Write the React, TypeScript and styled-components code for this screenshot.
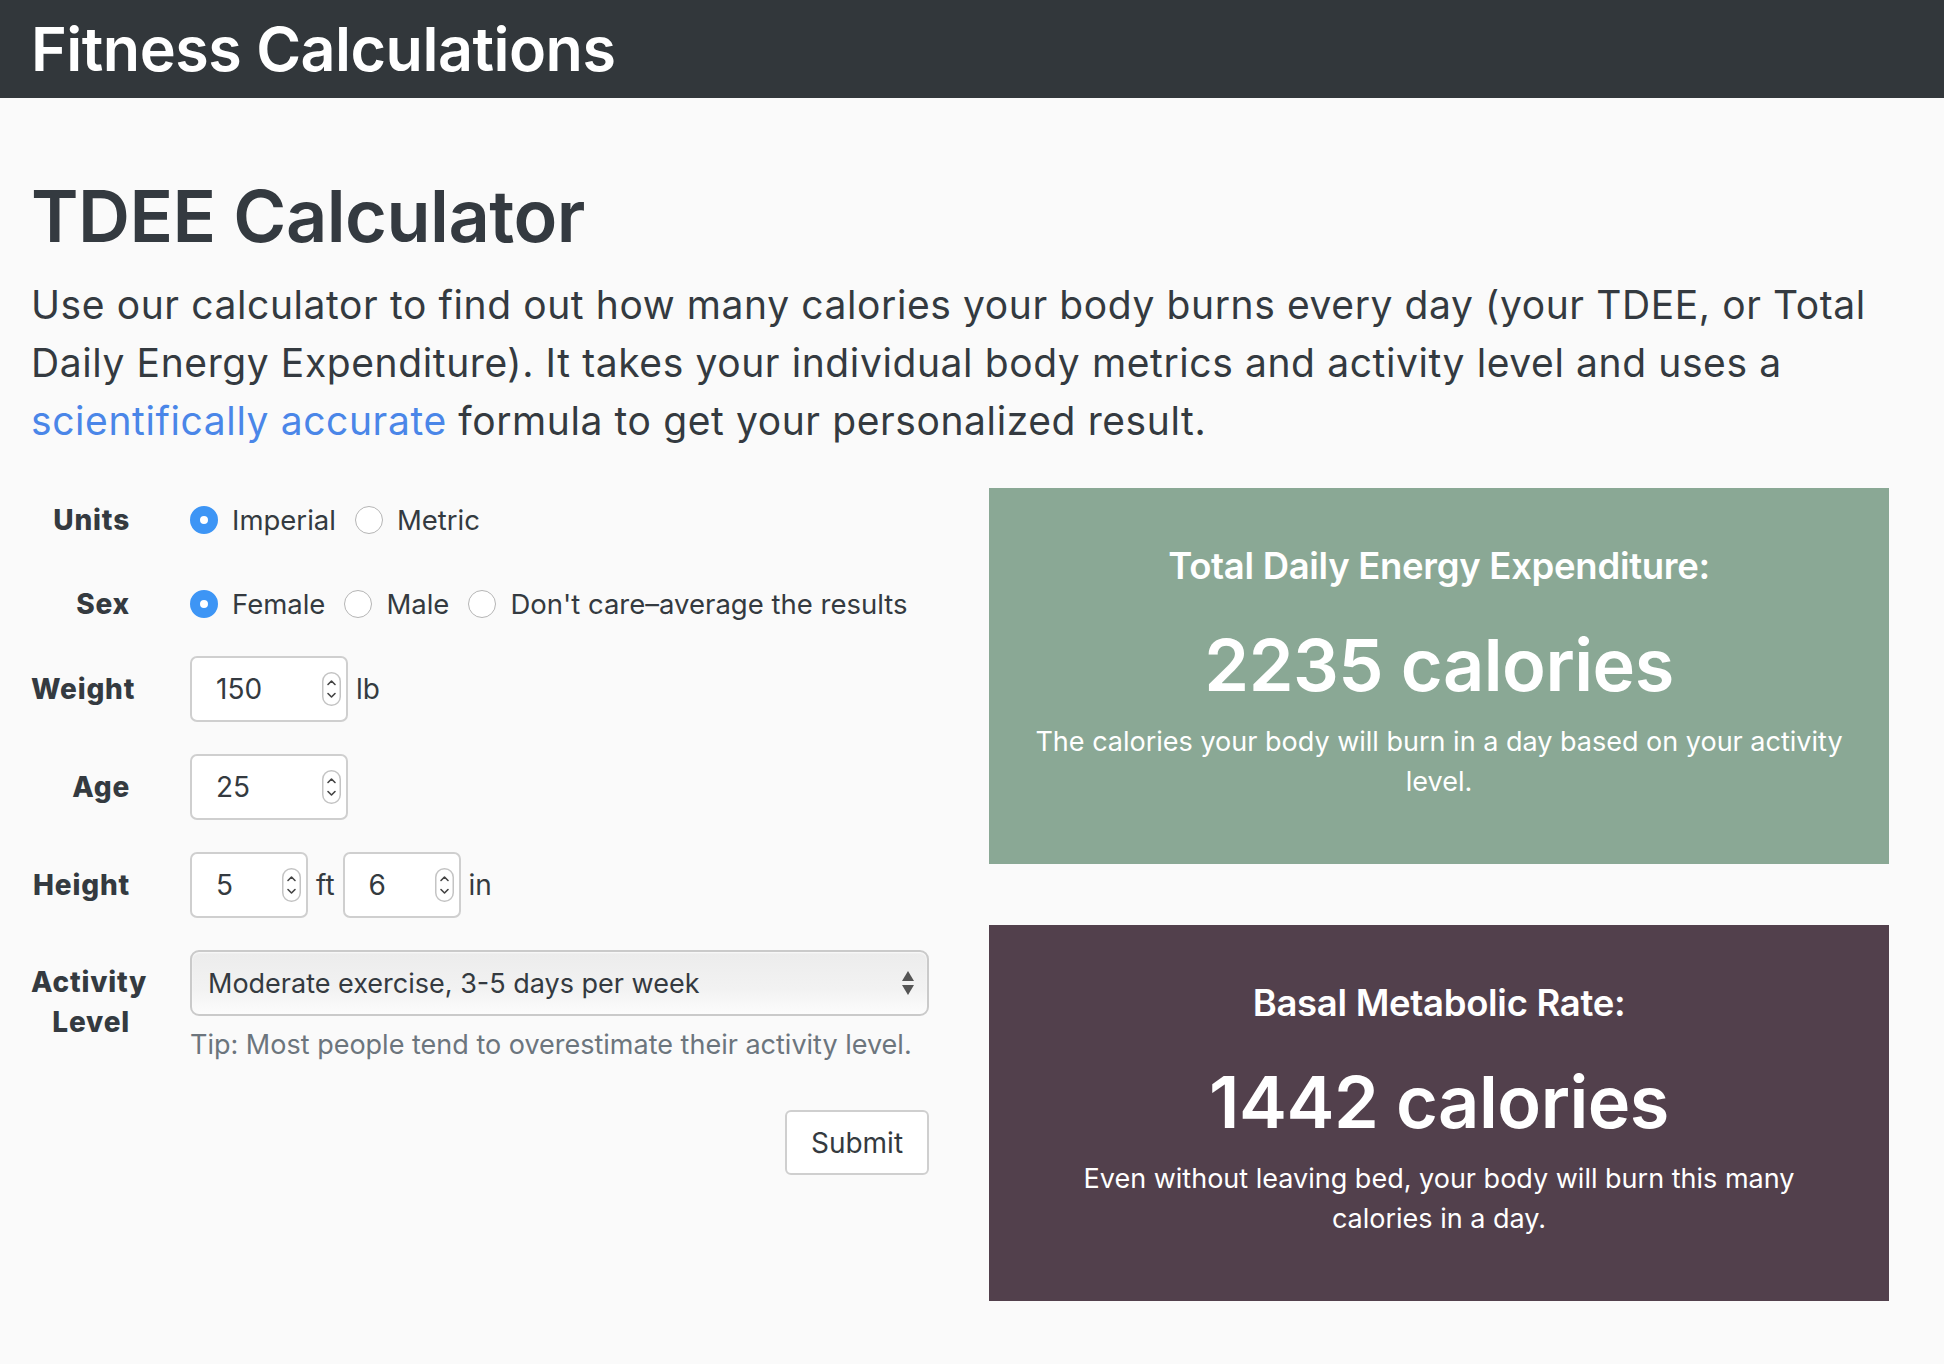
import styled, { createGlobalStyle } from 'styled-components';

const GlobalStyle = createGlobalStyle`
  html, body {
    margin: 0;
    padding: 0;
    background: #fafafa;
    font-family: Inter, "Open Sans", sans-serif;
    color: #343a40;
  }
  * { box-sizing: border-box; }
`;

const TEXT = '#343a40';

type RadioOption = { label: string; checked?: boolean };

const units: RadioOption[] = [{ label: 'Imperial', checked: true }, { label: 'Metric' }];
const sexes: RadioOption[] = [
  { label: 'Female', checked: true },
  { label: 'Male' },
  { label: "Don't care–average the results" },
];

function Spinner() {
  return (
    <SpinBox viewBox="0 0 19 34" width="19" height="34">
      <rect x="0.75" y="0.75" width="17.5" height="32.5" rx="8.5" fill="#fff" stroke="#c4c4c4" strokeWidth="1.5" />
      <path d="M6 12.5 L9.5 9 L13 12.5" fill="none" stroke="#444" strokeWidth="1.6" strokeLinecap="round" strokeLinejoin="round" />
      <path d="M6 21.5 L9.5 25 L13 21.5" fill="none" stroke="#444" strokeWidth="1.6" strokeLinecap="round" strokeLinejoin="round" />
    </SpinBox>
  );
}

function NumberField({ value, width }: { value: string; width: number }) {
  return (
    <NumBox $width={width}>
      <NumInput type="text" defaultValue={value} />
      <Spinner />
    </NumBox>
  );
}

export default function App() {
  return (
    <>
      <GlobalStyle />
      <Header>
        <Brand>Fitness Calculations</Brand>
      </Header>
      <Main>
        <Title>TDEE Calculator</Title>
        <Lead>
          Use our calculator to find out how many calories your body burns every day (your TDEE, or Total
          Daily Energy Expenditure). It takes your individual body metrics and activity level and uses a{' '}
          <Link href="#">scientifically accurate</Link> formula to get your personalized result.
        </Lead>
        <Columns>
          <Form onSubmit={(e) => e.preventDefault()}>
            <Row $radio>
              <Label>Units</Label>
              <Options>
                {units.map((o) => (
                  <Option key={o.label}>
                    <Radio type="radio" name="units" defaultChecked={o.checked} />
                    {o.label}
                  </Option>
                ))}
              </Options>
            </Row>
            <Row $radio>
              <Label>Sex</Label>
              <Options>
                {sexes.map((o) => (
                  <Option key={o.label}>
                    <Radio type="radio" name="sex" defaultChecked={o.checked} />
                    {o.label}
                  </Option>
                ))}
              </Options>
            </Row>
            <Row>
              <Label>Weight</Label>
              <Fields>
                <NumberField value="150" width={158} />
                <Unit>lb</Unit>
              </Fields>
            </Row>
            <Row>
              <Label>Age</Label>
              <Fields>
                <NumberField value="25" width={158} />
              </Fields>
            </Row>
            <Row>
              <Label>Height</Label>
              <Fields>
                <NumberField value="5" width={118} />
                <Unit>ft</Unit>
                <NumberField value="6" width={118} />
                <Unit>in</Unit>
              </Fields>
            </Row>
            <Row $top>
              <Label $top>Activity Level</Label>
              <div>
                <SelectBox>
                  <Select defaultValue="moderate">
                    <option value="sedentary">Sedentary (office job)</option>
                    <option value="light">Light exercise, 1-2 days per week</option>
                    <option value="moderate">Moderate exercise, 3-5 days per week</option>
                    <option value="heavy">Heavy exercise, 6-7 days per week</option>
                    <option value="athlete">Athlete, 2x per day</option>
                  </Select>
                  <svg width="14" height="26" viewBox="0 0 14 26">
                    <path d="M7 1 L13 11 L1 11 Z" fill="#555" />
                    <path d="M7 25 L13 15 L1 15 Z" fill="#555" />
                  </svg>
                </SelectBox>
                <Tip>Tip: Most people tend to overestimate their activity level.</Tip>
              </div>
            </Row>
            <Actions>
              <SubmitButton type="submit">Submit</SubmitButton>
            </Actions>
          </Form>
          <Results>
            <ResultCard $bg="#8aa895">
              <CardTitle>Total Daily Energy Expenditure:</CardTitle>
              <CardValue>2235 calories</CardValue>
              <CardText>The calories your body will burn in a day based on your activity level.</CardText>
            </ResultCard>
            <ResultCard $bg="#52404c">
              <CardTitle>Basal Metabolic Rate:</CardTitle>
              <CardValue>1442 calories</CardValue>
              <CardText $maxWidth={780}>
                Even without leaving bed, your body will burn this many calories in a day.
              </CardText>
            </ResultCard>
          </Results>
        </Columns>
      </Main>
    </>
  );
}

const Header = styled.header`
  height: 98px;
  background: #32373b;
  display: flex;
  align-items: center;
  padding-left: 31px;
`;

const Brand = styled.div`
  color: #fff;
  font-size: 61px;
  font-weight: 600;
  letter-spacing: -0.5px;
`;

const Main = styled.main`
  padding: 0 55px 60px 31px;
`;

const Title = styled.h1`
  margin: 76px 0 0;
  font-size: 72px;
  line-height: 84px;
  font-weight: 600;
  letter-spacing: -0.5px;
  color: ${TEXT};
`;

const Lead = styled.p`
  margin: 18px 0 38px;
  font-size: 39px;
  line-height: 58px;
  font-weight: 400;
  letter-spacing: 0.6px;
  color: ${TEXT};
`;

const Link = styled.a`
  color: #4a86e8;
  text-decoration: none;
`;

const Columns = styled.div`
  display: grid;
  grid-template-columns: 898px 900px;
  column-gap: 60px;
  align-items: start;
`;

const Form = styled.form`
  display: flex;
  flex-direction: column;
`;

const Row = styled.div<{ $radio?: boolean; $top?: boolean }>`
  display: grid;
  grid-template-columns: 99px 1fr;
  column-gap: 60px;
  align-items: ${(p) => (p.$top ? 'start' : 'center')};
  min-height: ${(p) => (p.$radio ? '64px' : '66px')};
  margin-bottom: ${(p) => (p.$radio ? '20px' : '32px')};
`;

const Label = styled.label<{ $top?: boolean }>`
  text-align: right;
  font-size: 28px;
  font-weight: 800;
  line-height: 40px;
  letter-spacing: 0.8px;
  color: ${TEXT};
  padding-top: ${(p) => (p.$top ? '12px' : '0')};
`;

const Options = styled.div`
  display: flex;
  align-items: center;
  gap: 19px;
`;

const Option = styled.label`
  display: flex;
  align-items: center;
  gap: 14px;
  font-size: 27.5px;
  color: ${TEXT};
`;

const Radio = styled.input`
  appearance: none;
  margin: 0;
  width: 28px;
  height: 28px;
  border-radius: 50%;
  border: 1.5px solid #b5b5b5;
  background: #fff;
  &:checked {
    border: 10px solid #3d95f5;
    background: #fff;
  }
`;

const Fields = styled.div`
  display: flex;
  align-items: center;
  gap: 8px;
`;

const NumBox = styled.div<{ $width: number }>`
  width: ${(p) => p.$width}px;
  height: 66px;
  display: flex;
  align-items: center;
  padding: 0 5px 0 24px;
  background: #fff;
  border: 2px solid #cfcfcf;
  border-radius: 7px;
`;

const NumInput = styled.input`
  flex: 1;
  min-width: 0;
  border: none;
  outline: none;
  background: transparent;
  font-family: inherit;
  font-size: 28px;
  color: ${TEXT};
  padding: 0;
`;

const SpinBox = styled.svg`
  flex: none;
`;

const Unit = styled.span`
  font-size: 28px;
  color: ${TEXT};
`;

const SelectBox = styled.div`
  width: 739px;
  height: 66px;
  display: flex;
  align-items: center;
  padding: 0 12px 0 16px;
  border: 2px solid #cacaca;
  border-radius: 9px;
  background: linear-gradient(#ececec, #f2f2f2 60%, #fcfcfc);
  box-shadow: inset 0 1px 2px rgba(255, 255, 255, 0.8);
`;

const Select = styled.select`
  flex: 1;
  appearance: none;
  border: none;
  outline: none;
  background: transparent;
  font-family: inherit;
  font-size: 27px;
  color: ${TEXT};
  padding: 0;
`;

const Tip = styled.div`
  margin-top: 10px;
  font-size: 27px;
  line-height: 38px;
  color: #6c757d;
`;

const Actions = styled.div`
  display: flex;
  justify-content: flex-end;
  margin-top: 14px;
`;

const SubmitButton = styled.button`
  width: 144px;
  height: 65px;
  background: #fff;
  border: 2px solid #cfcfcf;
  border-radius: 6px;
  font-family: inherit;
  font-size: 28px;
  color: ${TEXT};
`;

const Results = styled.div`
  display: flex;
  flex-direction: column;
  gap: 61px;
`;

const ResultCard = styled.section<{ $bg: string }>`
  background: ${(p) => p.$bg};
  color: #fff;
  text-align: center;
  height: 376px;
  padding: 56px 40px 0;
`;

const CardTitle = styled.h3`
  margin: 0;
  font-size: 36.5px;
  line-height: 44px;
  font-weight: 600;
  letter-spacing: -0.3px;
`;

const CardValue = styled.div`
  margin-top: 34px;
  font-size: 72px;
  line-height: 86px;
  font-weight: 600;
  letter-spacing: -0.5px;
`;

const CardText = styled.p<{ $maxWidth?: number }>`
  margin: 14px auto 0;
  max-width: ${(p) => (p.$maxWidth ? `${p.$maxWidth}px` : 'none')};
  font-size: 27px;
  line-height: 40px;
`;
